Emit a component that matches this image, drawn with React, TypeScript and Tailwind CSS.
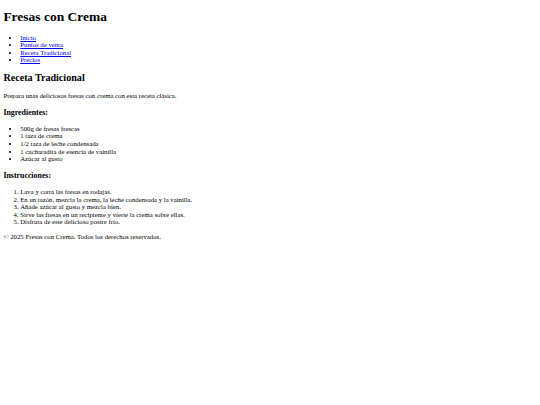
import React from 'react';

const navLinks = ['Inicio', 'Puntos de venta', 'Receta Tradicional', 'Precios'];

const ingredientes = [
  '500g de fresas frescas',
  '1 taza de crema',
  '1/2 taza de leche condensada',
  '1 cucharadita de esencia de vainilla',
  'Azúcar al gusto',
];

const pasos = [
  'Lava y corta las fresas en rodajas.',
  'En un tazón, mezcla la crema, la leche condensada y la vainilla.',
  'Añade azúcar al gusto y mezcla bien.',
  'Sirve las fresas en un recipiente y vierte la crema sobre ellas.',
  'Disfruta de este delicioso postre frío.',
];

export default function App() {
  return (
    <div className="bg-white min-h-screen flow-root">
      <div className="m-[3.375px] font-['Liberation_Serif',serif] text-[6.75px] leading-[7.6px] text-black">
        <header>
          <h1 className="text-[13.5px] leading-[15.6px] font-bold my-[9.045px]">Fresas con Crema</h1>
          <nav>
            <ul className="list-disc pl-[16.875px] my-[6.75px]">
              {navLinks.map(link => (
                <li key={link}>
                  <a href="#" className="text-[#0000ee] underline">
                    {link}
                  </a>
                </li>
              ))}
            </ul>
          </nav>
        </header>

        <main>
          <section>
            <h2 className="text-[10.125px] leading-[11.4px] font-bold my-[8.404px]">Receta Tradicional</h2>
            <p className="my-[6.75px]">Prepara unas deliciosas fresas con crema con esta receta clásica.</p>

            <h3 className="text-[7.898px] leading-[9.3px] font-bold my-[7.898px]">Ingredientes:</h3>
            <ul className="list-disc pl-[16.875px] my-[6.75px]">
              {ingredientes.map(item => (
                <li key={item}>{item}</li>
              ))}
            </ul>

            <h3 className="text-[7.898px] leading-[9.3px] font-bold my-[7.898px]">Instrucciones:</h3>
            <ol className="list-decimal pl-[16.875px] my-[6.75px]">
              {pasos.map(paso => (
                <li key={paso}>{paso}</li>
              ))}
            </ol>
          </section>
        </main>

        <footer>
          <p className="my-[6.75px]">© 2025 Fresas con Crema. Todos los derechos reservados.</p>
        </footer>
      </div>
    </div>
  );
}
